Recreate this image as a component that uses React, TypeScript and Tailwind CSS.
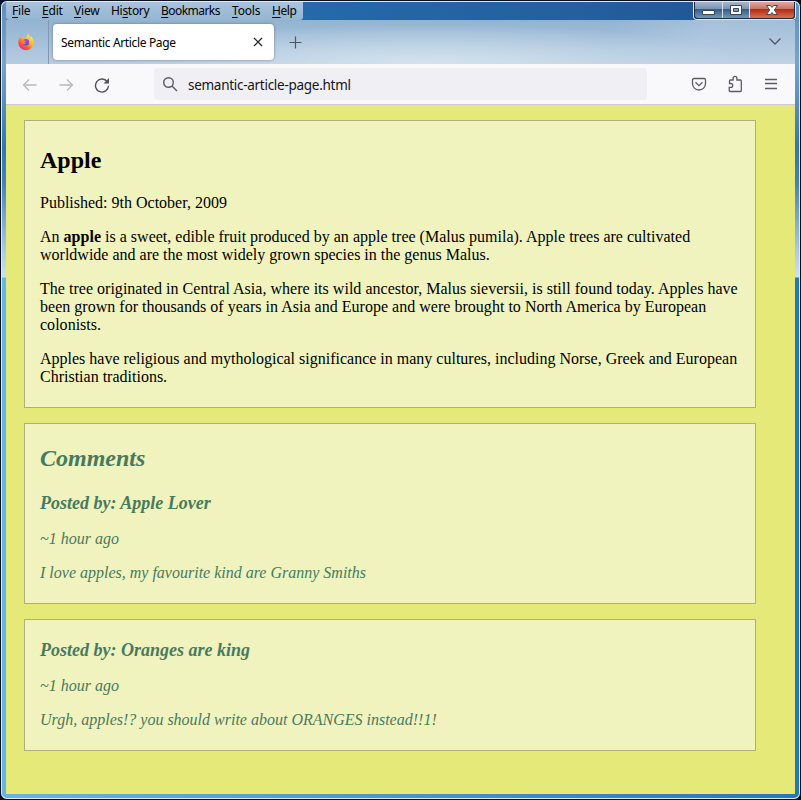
import React from 'react';

const MENU = [
  { pre: '', key: 'F', post: 'ile', cls: 'w-[30px] tracking-[-0.2px]' },
  { pre: '', key: 'E', post: 'dit', cls: 'w-[32px] tracking-[-0.2px]' },
  { pre: '', key: 'V', post: 'iew', cls: 'w-[37px] tracking-[-0.2px]' },
  { pre: 'Hi', key: 's', post: 'tory', cls: 'w-[50px] tracking-[-0.3px]' },
  { pre: '', key: 'B', post: 'ookmarks', cls: 'w-[71px] tracking-[-0.55px]' },
  { pre: '', key: 'T', post: 'ools', cls: 'w-[40px] tracking-[-0.2px]' },
  { pre: '', key: 'H', post: 'elp', cls: 'w-[28px] tracking-[-0.4px]' },
];

function Firefox() {
  return (
    <svg width="16" height="17" viewBox="0 0 16 17">
      <defs>
        <linearGradient id="ff" x1="0.85" y1="0.1" x2="0.2" y2="0.95">
          <stop offset="0" stopColor="#fff044" />
          <stop offset="0.4" stopColor="#ffb32a" />
          <stop offset="0.7" stopColor="#ff5b35" />
          <stop offset="1" stopColor="#f0258c" />
        </linearGradient>
        <linearGradient id="globe" x1="0.7" y1="0" x2="0.2" y2="1">
          <stop offset="0" stopColor="#a34bea" />
          <stop offset="1" stopColor="#5548c8" />
        </linearGradient>
      </defs>
      <path d="M8.6 3.2C8.7 1.600 9.600.4 10.600 0c.2 1.400 1 2 1.900 2.900.4-.1.500-.4.500-.7 1.600 1.400 2.600 3.900 2.600 6.500A7.600 7.600 0 0 1 .4 8.700c0-2.400.7-4.500 1.800-5.900l.5 1.400c1-.5 1.900-.2 2.600.3.900-.8 2-1.200 3.300-1.300z" fill="url(#ff)" />
      <circle cx="8" cy="8.200" r="3.200" fill="url(#globe)" />
      <path d="M3.700 6.300c1.300-.6 2.200-.3 2.800.3.600.2 1.400.2 1.600.5-.3.700-1.100.9-1.500 1.300 0 .9.900 1.300 2 .9-.8 1.200-2.600 1.400-3.700.5-.9-.7-1.400-2.200-1.200-3.500z" fill="#ff8426" />
    </svg>
  );
}

function MenuBar() {
  return (
    <div className="flex h-[18px] justify-between bg-[linear-gradient(90deg,#3b78ad,#2569a8_40%,#235f9c_75%,#1d538f)]">
      <div className="flex h-[18px] w-[297px] rounded-b-[3px] bg-[linear-gradient(180deg,#a8c3dd,#94b5d2)] pl-[6px] text-[12px] leading-[18px] text-black">
        {MENU.map((m) => (
          <span key={m.key} className={m.cls + ' shrink-0 whitespace-nowrap'}>
            {m.pre}
            <span className="underline decoration-1 underline-offset-2">{m.key}</span>
            {m.post}
          </span>
        ))}
      </div>
      <div className="mr-[-1px] flex h-[18px] w-[103px] rounded-b-[4px] border border-t-0 border-[#dce8f2] bg-[#1c2c43] px-px pb-px">
        <div className="flex w-[27px] items-center justify-center rounded-bl-[3px] bg-[linear-gradient(180deg,#a4b6cd_0%,#7993b2_45%,#355c88_46%,#7299ba_100%)]">
          <svg width="14" height="16" viewBox="0 0 14 16"><path d="M.5 8.500h12v4h-12z" fill="#fff" stroke="#3c4656" /></svg>
        </div>
        <div className="flex w-[27px] items-center justify-center border-l border-[#d3dfeb] bg-[linear-gradient(180deg,#a4b6cd_0%,#7993b2_45%,#355c88_46%,#7299ba_100%)]">
          <svg width="14" height="16" viewBox="0 0 14 16"><path d="M1.500 3.500h11v9h-11z" fill="#fff" stroke="#3c4656" /><path d="M4.500 6.500h5v3h-5z" fill="#7d9dbd" stroke="#3c4656" /></svg>
        </div>
        <div className="flex flex-1 items-center justify-center rounded-br-[3px] border-l border-[#eadad9] bg-[linear-gradient(180deg,#dda99f_0%,#c9705f_45%,#b02c18_46%,#d7714d_100%)]">
          <svg width="14" height="16" viewBox="0 0 14 16"><path d="M1.500 3.500h4L7 5.500l1.500-2h4L9.300 8l3.200 4.500h-4L7 10.500l-1.500 2h-4L4.700 8z" fill="#fff" stroke="#4b4552" /></svg>
        </div>
      </div>
    </div>
  );
}

function TabStrip() {
  return (
    <div className="flex h-11 bg-[radial-gradient(ellipse_330px_42px_at_420px_46px,#d4e4ee_0%,#d4e4ee00_100%),linear-gradient(105deg,#ffffff00_76%,#c2d4e966_88%,#ffffff22_100%),linear-gradient(180deg,#92b3d1,#b7cce2)]">
      <div className="flex w-[43px] shrink-0 border-r border-[#8296ac] pl-3 pt-[14px]">
        <Firefox />
      </div>
      <div className="ml-1 mt-1 flex h-[36px] w-[221px] items-center justify-between rounded-[4px] bg-white pl-2 pr-[10px] shadow-[0_0_3px_rgba(60,80,110,0.6)]">
        <span className="mt-[2px] whitespace-nowrap text-[12px] tracking-[-0.350px] text-black">Semantic Article Page</span>
        <svg width="12" height="12" viewBox="0 0 12 12"><path d="M2 2l8 8m0-8l-8 8" stroke="#222" strokeWidth="1.200" /></svg>
      </div>
      <svg width="14" height="14" viewBox="0 0 14 14" className="ml-[14px] mt-4"><path d="M1.500 6.500h12M7.500.5v12" stroke="#4e5565" strokeWidth="1.200" fill="none" /></svg>
      <svg width="14" height="10" viewBox="0 0 14 10" className="ml-auto mr-[13px] mt-[17px]"><path d="M1.500 1.500l5.500 5.500 5.500-5.500" stroke="#4e5565" strokeWidth="1.300" fill="none" /></svg>
    </div>
  );
}

function Toolbar() {
  return (
    <div className="flex h-[41px] items-center border-b border-[#ccccd3] bg-[#f9f9fb]">
      <svg width="16" height="16" viewBox="0 0 16 16" className="ml-4 mt-px" fill="none" stroke="#b8b8bd" strokeWidth="1.300"><path d="M14.500 8H1.500M7 2.500L1.500 8 7 13.500" /></svg>
      <svg width="16" height="16" viewBox="0 0 16 16" className="ml-5 mt-px" fill="none" stroke="#b8b8bd" strokeWidth="1.300"><path d="M1.500 8h13M9 2.500L14.500 8 9 13.500" /></svg>
      <svg width="16" height="16" viewBox="0 0 16 16" className="ml-5 mt-[2px]" fill="none" stroke="#52525e" strokeWidth="1.400"><path d="M13.300 4.800A6.500 6.500 0 1 0 14.500 8.800" /><path d="M15 1v5.500H9.500z" fill="#52525e" stroke="none" /></svg>
      <div className="ml-[44px] flex h-8 w-[493px] items-center rounded-[4px] bg-[#f0eff4] pl-2">
        <svg width="16" height="16" viewBox="0 0 16 16" fill="none" stroke="#5b5b66" strokeWidth="1.400"><circle cx="6.500" cy="6.500" r="4.800" /><path d="M10 10l5 5" /></svg>
        <span className="ml-[10px] mt-[3px] text-[13.500px] tracking-[-0.280px] text-[#15141a]">semantic-article-page.html</span>
      </div>
      <svg width="16" height="16" viewBox="0 0 16 16" className="ml-[44px]" fill="none" stroke="#5b5b66" strokeWidth="1.300"><path d="M3 2.500h10a1.500 1.500 0 0 1 1.500 1.500v3.500a6.500 6.500 0 0 1-13 0V4A1.500 1.500 0 0 1 3 2.500z" /><path d="M4.500 6.300L8 9.600l3.500-3.300" /></svg>
      <svg width="16" height="18" viewBox="0 0 16 18" className="ml-5" fill="none" stroke="#5b5b66" strokeWidth="1.300"><path d="M3 16.500h10.200q1.100 0 1.100-1V6q0-1-1.100-1h-3.300V3.200a1.900 1.900 0 0 0-3.800 0V5H3.500q-1 0-1 1v2.500h1.300a1.900 1.900 0 0 1 0 3.800H2.200v3.200q0 1 .8 1z" /></svg>
      <svg width="14" height="14" viewBox="0 0 14 14" className="ml-[21px]" stroke="#5b5b66" strokeWidth="1.300"><path d="M1 2.500h12M1 6.500h12M1 11.500h12" /></svg>
    </div>
  );
}

function Comment({ who, text }: { who: string; text: string }) {
  return (
    <>
      <h3 className="text-[18px] font-bold leading-[22px]">Posted by: {who}</h3>
      <p className="mt-4">~1 hour ago</p>
      <p className="mt-4">{text}</p>
    </>
  );
}

export default function App() {
  return (
    <div className="h-[800px] w-[801px] overflow-hidden bg-[linear-gradient(90deg,#06122e,#040a20)]">
      <div className="flex h-[800px] w-[801px] flex-col rounded-[7px] border border-[#08101f] bg-[#dfecf5] p-px">
        <div className="flex min-h-0 flex-1 flex-col overflow-hidden rounded-[5px] bg-[linear-gradient(180deg,#5c8fc0_0px,#78a3cb_60px,#5c8dbb_100px,#2f77b3_145px,#4381b8_180px,#b4cae2_250px,#cfdff0_275px,#ffffff00_276px),linear-gradient(90deg,#68b4e2,#2377bd)] px-1 pb-1">
          <div className="flex h-[792px] w-[789px] flex-col font-['Noto_Sans','Open_Sans',sans-serif]">
            <MenuBar />
            <TabStrip />
            <Toolbar />
            <main className="flex h-[689px] flex-col gap-[15px] bg-[#e4e977] pl-[18px] pt-[15px] font-['Liberation_Serif',serif] text-[16px] leading-[18px] text-black">
              <article className="h-[288px] w-[732px] border border-[#b2ae82] bg-[#f0f3be] px-[15px] pt-[26px]">
                <h2 className="text-[24px] font-bold leading-[27px]">Apple</h2>
                <p className="mt-5">Published: 9th October, 2009</p>
                <p className="mt-4"><span className="tracking-[0.010px]">An <b>apple</b> is a sweet, edible fruit produced by an apple tree (Malus pumila). Apple trees are cultivated</span><br />worldwide and are the most widely grown species in the genus Malus.</p>
                <p className="mt-4 tracking-[0.020px]">The tree originated in Central Asia, where its wild ancestor, Malus sieversii, is still found today. Apples have<br />been grown for thousands of years in Asia and Europe and were brought to North America by European<br />colonists.</p>
                <p className="mt-4">Apples have religious and mythological significance in many cultures, including Norse, Greek and European<br />Christian traditions.</p>
              </article>
              <section className="h-[181px] w-[732px] border border-[#b2ae82] bg-[#f0f3be] px-[15px] pt-[21px] italic text-[#487a5f]">
                <h2 className="mb-[20px] text-[24px] font-bold leading-[27px]">Comments</h2>
                <Comment who="Apple Lover" text="I love apples, my favourite kind are Granny Smiths" />
              </section>
              <section className="h-[132px] w-[732px] border border-[#b2ae82] bg-[#f0f3be] px-[15px] pt-[19px] italic text-[#487a5f]">
                <Comment who="Oranges are king" text="Urgh, apples!? you should write about ORANGES instead!!1!" />
              </section>
            </main>
          </div>
        </div>
      </div>
    </div>
  );
}
